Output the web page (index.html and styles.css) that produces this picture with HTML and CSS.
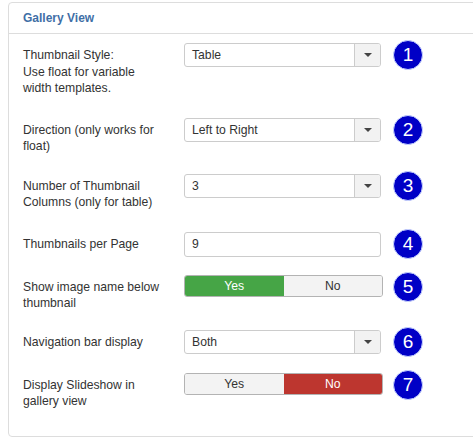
FILE: index.html
```html
<!DOCTYPE html>
<html>
<head>
<meta charset="utf-8">
<link rel="stylesheet" href="styles.css">
</head>
<body>
<div class="panel">
  <div class="panel-head">Gallery View</div>
  <div class="panel-body">
    <div class="row r1">
      <div class="label">Thumbnail Style:<br>Use float for variable width templates.</div>
      <div class="select"><span class="val">Table</span><span class="caret"><i></i></span></div>
      <div class="badge">1</div>
    </div>
    <div class="row r2">
      <div class="label">Direction (only works for float)</div>
      <div class="select"><span class="val">Left to Right</span><span class="caret"><i></i></span></div>
      <div class="badge">2</div>
    </div>
    <div class="row r3">
      <div class="label">Number of Thumbnail Columns (only for table)</div>
      <div class="select"><span class="val">3</span><span class="caret"><i></i></span></div>
      <div class="badge">3</div>
    </div>
    <div class="row r4">
      <div class="label">Thumbnails per Page</div>
      <div class="input">9</div>
      <div class="badge">4</div>
    </div>
    <div class="row r5">
      <div class="label">Show image name below thumbnail</div>
      <div class="toggle"><span class="seg on-yes">Yes</span><span class="seg">No</span></div>
      <div class="badge">5</div>
    </div>
    <div class="row r6">
      <div class="label">Navigation bar display</div>
      <div class="select"><span class="val">Both</span><span class="caret"><i></i></span></div>
      <div class="badge">6</div>
    </div>
    <div class="row r7">
      <div class="label">Display Slideshow in gallery view</div>
      <div class="toggle"><span class="seg">Yes</span><span class="seg on-no">No</span></div>
      <div class="badge">7</div>
    </div>
  </div>
</div>
</body>
</html>
```

FILE: styles.css
```css
html, body {
  margin: 0;
  padding: 0;
  background: #fff;
  overflow: hidden;
}
body {
  padding: 2px 0 0 8px;
  font-family: "Liberation Sans", Arial, sans-serif;
  font-size: 12.2px;
  color: #333;
}
.panel {
  width: 480px;
  height: 435px;
  box-sizing: border-box;
  border: 1px solid #ddd;
  border-radius: 4px 0 0 4px;
}
.panel-head {
  height: 31px;
  box-sizing: border-box;
  border-bottom: 1px solid #ddd;
  padding: 8px 0 0 14px;
  font-weight: bold;
  font-size: 12px;
  color: #3f6fa6;
}
.panel-body {
  padding: 9px 0 0 14px;
}
.row {
  display: grid;
  grid-template-columns: 140px 199px 32px;
  column-gap: 21px;
  align-items: start;
  margin-bottom: 19px;
}
.r1 { margin-bottom: 21px; }
.r3 { margin-bottom: 21px; }
.r4 { margin-bottom: 18px; }
.r5 { margin-bottom: 18px; }
.label {
  padding-top: 4px;
  line-height: 16.5px;
}
.select, .input {
  width: 197px;
  height: 24px;
  box-sizing: border-box;
  border: 1px solid #ccc;
  border-radius: 3px;
  display: flex;
  align-items: center;
  background: #fff;
}
.input {
  height: 25px;
  padding-left: 7px;
}
.select .val {
  flex: 1;
  padding-left: 7px;
}
.select .caret {
  width: 25px;
  height: 100%;
  border-left: 1px solid #ccc;
  background: #f2f2f2;
  display: flex;
  align-items: center;
  justify-content: center;
  border-radius: 0 2px 2px 0;
}
.select .caret i {
  width: 0;
  height: 0;
  border-left: 4px solid transparent;
  border-right: 4px solid transparent;
  border-top: 4px solid #444;
}
.toggle {
  width: 199px;
  height: 22px;
  box-sizing: border-box;
  border: 1px solid #b3b3b3;
  border-radius: 3px;
  display: flex;
  overflow: hidden;
}
.toggle .seg {
  flex: 1;
  display: flex;
  align-items: center;
  justify-content: center;
  background: #f3f3f3;
  color: #333;
}
.toggle .on-yes {
  background: #46a546;
  color: #fff;
}
.toggle .on-no {
  background: #bd362f;
  color: #fff;
}
.badge {
  width: 28px;
  height: 28px;
  margin: -3px 0 -40px -11px;
  border-radius: 50%;
  background: #0000c6;
  border: 1px solid #c8d4ff;
  color: #fff;
  font-size: 19px;
  line-height: 28px;
  text-align: center;
  font-family: "Liberation Sans", Arial, sans-serif;
}
```
